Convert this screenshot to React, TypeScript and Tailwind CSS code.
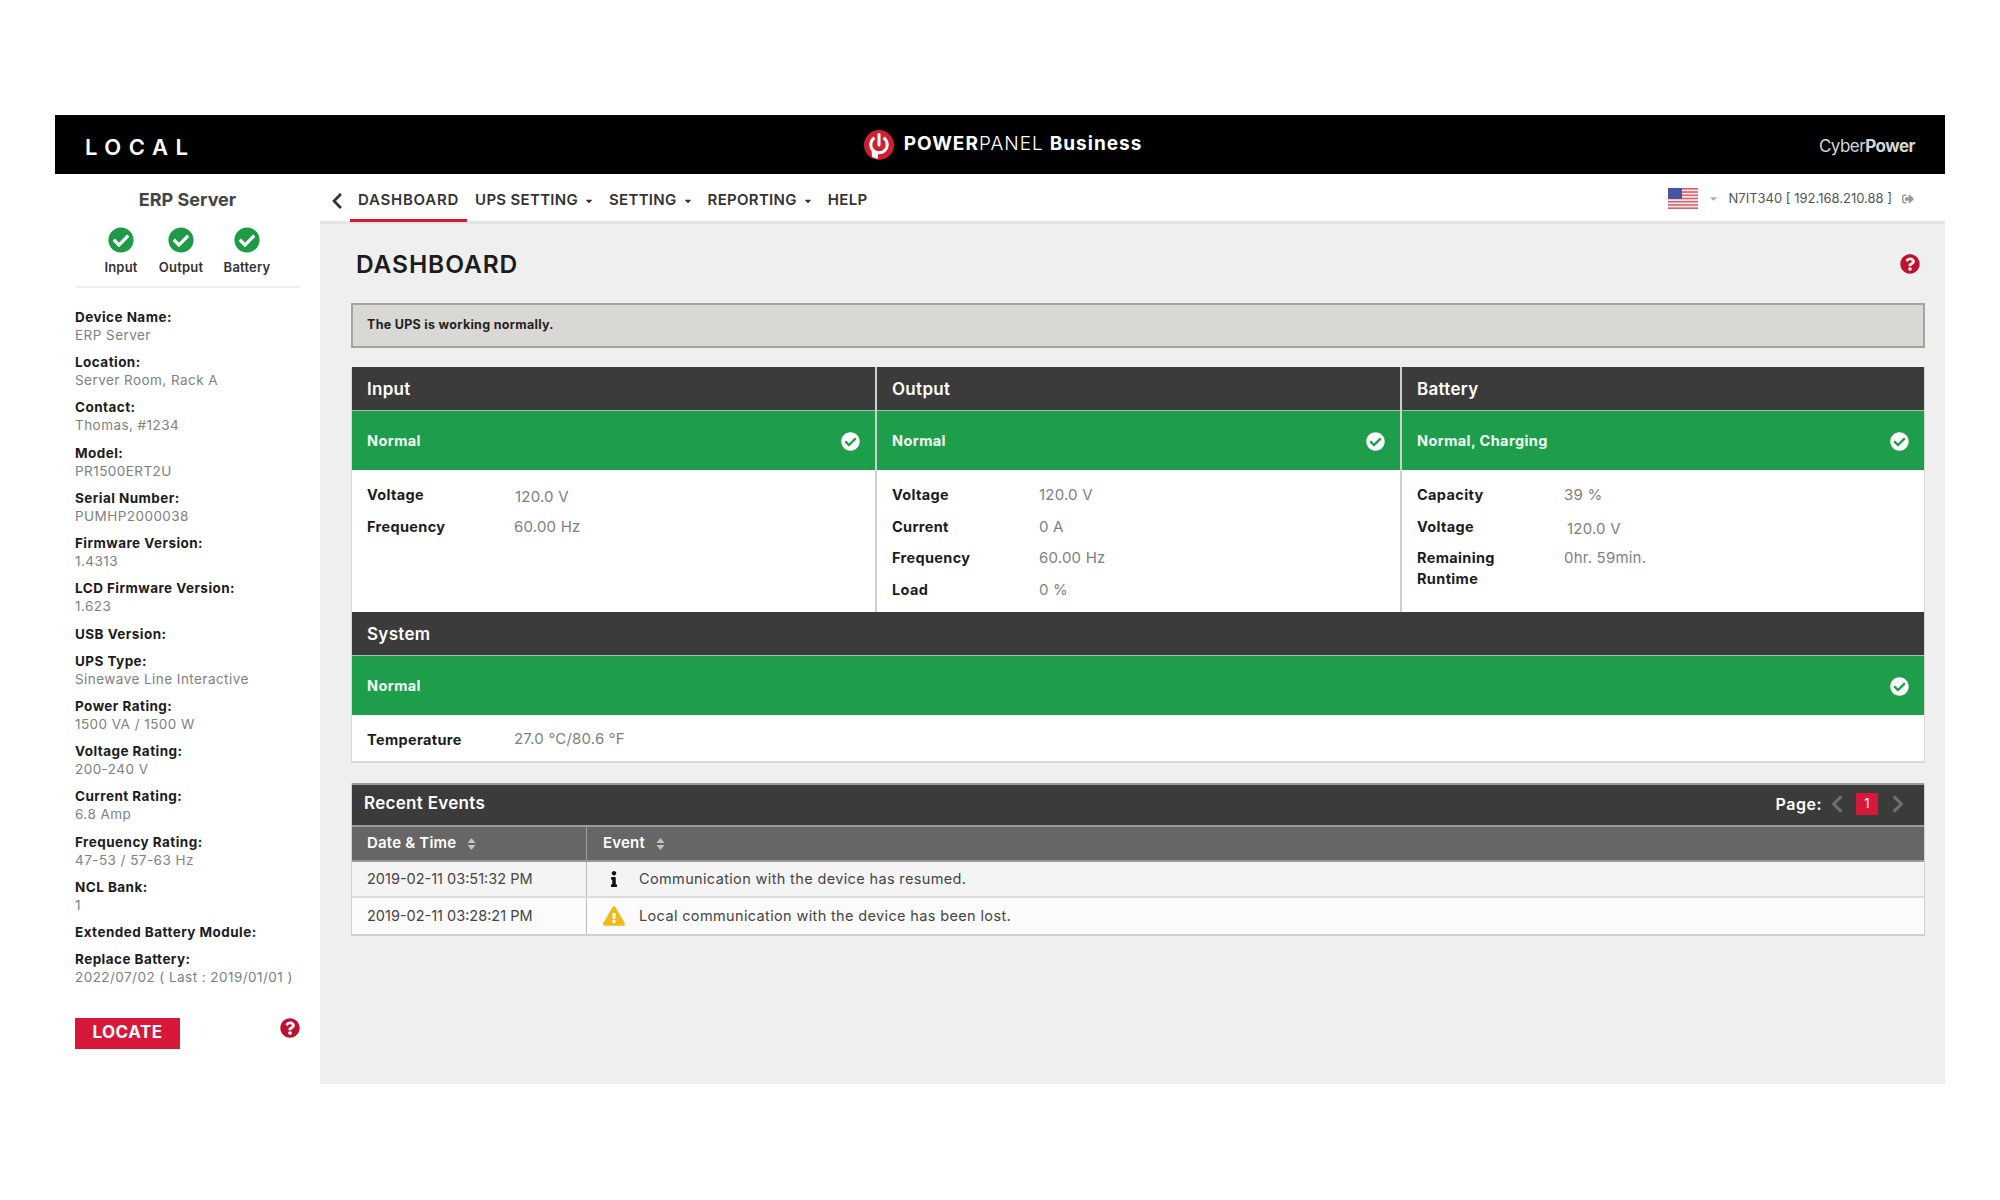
import type { ReactNode } from "react";
import { FaCaretDown, FaCheckCircle, FaChevronLeft, FaChevronRight, FaExclamationTriangle, FaInfo, FaQuestionCircle, FaSignOutAlt } from "react-icons/fa";

type Row = { label: string; value: string; valueClass?: string };

const deviceInfo: { label: string; value?: string }[] = [
  { label: "Device Name:", value: "ERP Server" },
  { label: "Location:", value: "Server Room, Rack A" },
  { label: "Contact:", value: "Thomas, #1234" },
  { label: "Model:", value: "PR1500ERT2U" },
  { label: "Serial Number:", value: "PUMHP2000038" },
  { label: "Firmware Version:", value: "1.4313" },
  { label: "LCD Firmware Version:", value: "1.623" },
  { label: "USB Version:" },
  { label: "UPS Type:", value: "Sinewave Line Interactive" },
  { label: "Power Rating:", value: "1500 VA / 1500 W" },
  { label: "Voltage Rating:", value: "200-240 V" },
  { label: "Current Rating:", value: "6.8 Amp" },
  { label: "Frequency Rating:", value: "47-53 / 57-63 Hz" },
  { label: "NCL Bank:", value: "1" },
  { label: "Extended Battery Module:" },
  { label: "Replace Battery:", value: "2022/07/02 ( Last : 2019/01/01 )" }
];

const columns: { title: string; status: string; rows: Row[] }[] = [
  {
    title: "Input",
    status: "Normal",
    rows: [
      { label: "Voltage", value: "120.0 V", valueClass: "mt-[2px] -mb-[2px] pl-[1px]" },
      { label: "Frequency", value: "60.00 Hz" }
    ]
  },
  {
    title: "Output",
    status: "Normal",
    rows: [
      { label: "Voltage", value: "120.0 V" },
      { label: "Current", value: "0 A" },
      { label: "Frequency", value: "60.00 Hz" },
      { label: "Load", value: "0 %" }
    ]
  },
  {
    title: "Battery",
    status: "Normal, Charging",
    rows: [
      { label: "Capacity", value: "39 %" },
      { label: "Voltage", value: "120.0 V", valueClass: "mt-[2px] -mb-[2px] pl-[3px]" },
      { label: "Remaining Runtime", value: "0hr. 59min." }
    ]
  }
];

function PowerLogo() {
  return (
    <svg viewBox="0 0 30 30" className="h-[30px] w-[30px]">
      <circle cx="15" cy="15" r="15" fill="#d0202f" />
      <path d="M10.500 7.800A8.200 8.200 0 1 0 19.500 7.800" fill="none" stroke="#fff" strokeWidth="3" />
      <path d="M7.500 19.500L14 22.500V29L8 27z" fill="#fff" />
      <path d="M15 4.500V15" stroke="#fff" strokeWidth="3" strokeLinecap="round" />
    </svg>
  );
}

function UsFlag() {
  const stripes = [0, 2, 4, 6, 8, 10, 12];
  return (
    <svg viewBox="0 0 30 21" preserveAspectRatio="none" className="h-[21px] w-[30px]">
      <rect width="30" height="21" fill="#f6f0f0" />
      {stripes.map((i) => (
        <rect key={i} y={(i * 21) / 13} width="30" height={21 / 13} fill="#d9626c" />
      ))}
      <rect width="14" height="11" fill="#4a55a0" />
    </svg>
  );
}

function SortIcon() {
  return (
    <svg viewBox="0 0 8 12" className="h-[12px] w-[9px]">
      <path d="M4 0l4 5H0zM4 12L0 7h8z" fill="#c4c4c4" />
    </svg>
  );
}

function StatusBar({ text }: { text: string }) {
  return (
    <div className="flex h-[60px] items-center justify-between border-t border-[#a9bdaf] bg-[#1e9e4a] pt-[2px] pr-[15px] pl-[15px]">
      <span className="pb-[2px] text-[14.500px] font-bold tracking-[0.4px] text-[#f0fff4]">{text}</span>
      <FaCheckCircle className="text-[19px] text-white" />
    </div>
  );
}

function DarkHeader({ title }: { title: string }) {
  return (
    <div className="flex h-[43px] items-center bg-[#3b3b3b] pt-[2px] pl-[15px] text-[17px] font-semibold tracking-[0.3px] text-white">{title}</div>
  );
}

function StatusLight({ label, width }: { label: string; width: string }) {
  return (
    <div className={`flex flex-col items-center ${width}`}>
      <FaCheckCircle className="text-[26px] text-[#1f9a49]" />
      <span className="mt-[6px] text-[13px] leading-[16px] font-semibold tracking-[0.2px] text-[#333]">{label}</span>
    </div>
  );
}

function Sidebar() {
  return (
    <aside className="flex w-[265px] shrink-0 flex-col bg-white pr-[20px] pl-[20px]">
      <h2 className="pt-[15px] text-center text-[18px] leading-[22px] font-bold text-[#444]">ERP Server</h2>
      <div className="mt-[16px] flex items-start border-b-2 border-[#eee] pb-[11px] pl-[16px]">
        <StatusLight label="Input" width="w-[60px]" />
        <StatusLight label="Output" width="w-[60px]" />
        <StatusLight label="Battery" width="w-[72px]" />
      </div>
      <dl className="mt-[20px] text-[13.500px] leading-[18px] tracking-[0.45px] whitespace-nowrap">
        {deviceInfo.map((item) => (
          <div key={item.label} className="mb-[9.230px]">
            <dt className="font-bold text-[#1c1c1c]">{item.label}</dt>
            {item.value ? <dd className="text-[#808080]">{item.value}</dd> : null}
          </div>
        ))}
      </dl>
      <div className="mt-[22px] flex items-start justify-between">
        <button className="flex h-[31px] w-[105px] items-center justify-center bg-[#d8183a] text-[17px] font-bold tracking-[0.5px] text-white">LOCATE</button>
        <FaQuestionCircle className="text-[20px] text-[#bd1230]" />
      </div>
    </aside>
  );
}

function NavItem({ label, caret, active }: { label: string; caret?: boolean; active?: boolean }) {
  return (
    <div className={`flex h-[48px] items-center gap-[6px] border-b-[3px] pt-[8px] pl-[8px] ${caret ? "pr-[7px]" : "pr-[8px]"} ${active ? "border-[#c8202f]" : "border-transparent"}`}>
      <span className={`text-[15px] font-semibold text-[#333] ${active ? "tracking-[0.75px]" : "tracking-[0.3px]"}`}>{label}</span>
      {caret ? <FaCaretDown className="text-[10px] text-[#333]" /> : null}
    </div>
  );
}

function EventRow({ date, text, icon, bg }: { date: string; text: string; icon: ReactNode; bg: string }) {
  return (
    <div className={`flex h-[36px] border-b-2 border-[#dcdcdc] text-[14.500px] text-[#444] last:border-b-0 ${bg}`}>
      <div className="flex w-[235px] items-center border-r border-[#bcbcbc] pl-[15px]">{date}</div>
      <div className="flex flex-1 items-center">
        <div className="flex w-[52px] justify-center pl-[2px]">{icon}</div>
        <span className="tracking-[0.36px]">{text}</span>
      </div>
    </div>
  );
}

export default function App() {
  return (
    <div className="h-[1200px] w-full bg-white pt-[115px] pr-[55px] pl-[55px] font-['Inter','Liberation_Sans',sans-serif]">
      <header className="flex h-[59px] items-center justify-between bg-black pr-[30px] pl-[30px]">
        <div className="w-[300px] pt-[5px] text-[22px] font-semibold tracking-[7.500px] text-white">LOCAL</div>
        <div className="ml-[6px] flex items-center gap-[10px]">
          <PowerLogo />
          <div className="text-[19px] tracking-[1px] text-white">
            <span className="font-bold">POWER</span>
            <span className="font-light">PANEL</span>
            <span className="ml-[6px] font-bold">Business</span>
          </div>
        </div>
        <div className="flex w-[300px] justify-end pt-[4px] text-[17px] font-bold tracking-[-0.5px] text-[#d6d6d6]">
          <span className="font-normal">Cyber</span>Power
        </div>
      </header>

      <div className="flex h-[910px]">
        <Sidebar />
        <main className="flex min-w-0 flex-1 flex-col bg-[#efefef]">
          <nav className="flex h-[50px] items-stretch justify-between border-b-[3px] border-[#e2e2e2] bg-white pr-[31px] pl-[8px]">
            <div className="flex items-start">
              <FaChevronLeft className="mt-[18px] mr-[4px] text-[18px] text-[#333]" />
              <NavItem label="DASHBOARD" active />
              <NavItem label="UPS SETTING" caret />
              <NavItem label="SETTING" caret />
              <NavItem label="REPORTING" caret />
              <NavItem label="HELP" />
            </div>
            <div className="flex items-center gap-[10px] pt-[2px]">
              <UsFlag />
              <FaCaretDown className="text-[11px] text-[#aaa]" />
              <span className="text-[13px] text-[#555]">N7IT340 [ 192.168.210.88 ]</span>
              <FaSignOutAlt className="text-[12px] text-[#999]" />
            </div>
          </nav>

          <div className="pt-[24px] pr-[20px] pl-[31px]">
            <div className="flex h-[32px] items-center justify-between pr-[5px] pl-[5px]">
              <h1 className="text-[24.500px] font-semibold tracking-[0.9px] text-[#1c1c1c]">DASHBOARD</h1>
              <FaQuestionCircle className="text-[20px] text-[#bd1230]" />
            </div>

            <div className="mt-[23px] flex h-[45px] items-center border-2 border-[#a3a3a0] bg-[#d9d8d4] pl-[14px] text-[12.500px] font-bold tracking-[0.3px] text-[#222]">
              The UPS is working normally.
            </div>

            <section className="mt-[19px] border-r border-b-2 border-l border-[#d8d8d8] bg-white">
              <div className="grid grid-cols-[523px_525px_1fr]">
                {columns.map((col, i) => (
                  <div key={col.title} className={i > 0 ? "border-l-2 border-[#cfcfcf]" : ""}>
                    <DarkHeader title={col.title} />
                    <StatusBar text={col.status} />
                    <div className="h-[142px] pt-[14px] pl-[15px] text-[15px] leading-[21px]">
                      {col.rows.map((row) => (
                        <div key={row.label} className="mb-[10.500px] flex">
                          <span className="w-[147px] shrink-0 pr-[30px] text-[14.500px] font-bold tracking-[0.35px] text-[#1c1c1c]">{row.label}</span>
                          <span className={`tracking-[0.2px] text-[#808080] ${row.valueClass ?? ""}`}>{row.value}</span>
                        </div>
                      ))}
                    </div>
                  </div>
                ))}
              </div>
              <DarkHeader title="System" />
              <StatusBar text="Normal" />
              <div className="flex h-[46px] items-center pt-[3px] pl-[15px]">
                <span className="w-[147px] shrink-0 text-[14.500px] font-bold tracking-[0.35px] text-[#1c1c1c]">Temperature</span>
                <span className="text-[15px] tracking-[0.2px] text-[#808080]">27.0 °C/80.6 °F</span>
              </div>
            </section>

            <section className="mt-[20px] border-r border-b-2 border-l border-[#d0d0d0]">
              <div className="flex h-[42px] items-center justify-between border-t-2 border-[#9a9a9a] bg-[#3b3b3b] pr-[16px] pb-[2px] pl-[12px] text-white">
                <span className="text-[17px] font-semibold tracking-[0.3px]">Recent Events</span>
                <div className="flex items-center">
                  <span className="mr-[5px] text-[16px] font-semibold tracking-[0.5px]">Page:</span>
                  <FaChevronLeft className="text-[20px] text-[#6e6e6e]" />
                  <span className="mr-[10px] ml-[9px] flex h-[22px] w-[22px] items-center justify-center bg-[#d8183a] text-[13px] text-white">1</span>
                  <FaChevronRight className="text-[20px] text-[#6e6e6e]" />
                </div>
              </div>
              <div className="flex h-[37px] border-t-2 border-b-2 border-[#9a9a9a] bg-[#666] text-[15px] font-semibold tracking-[0.2px] text-white">
                <div className="flex w-[235px] items-center gap-[11px] border-r border-[#a0a0a0] pl-[15px]">
                  Date &amp; Time <SortIcon />
                </div>
                <div className="flex flex-1 items-center gap-[11px] pl-[16px]">
                  Event <SortIcon />
                </div>
              </div>
              <EventRow date="2019-02-11 03:51:32 PM" text="Communication with the device has resumed." bg="bg-[#f4f4f4]" icon={<FaInfo className="text-[16px] text-[#111]" />} />
              <EventRow date="2019-02-11 03:28:21 PM" text="Local communication with the device has been lost." bg="bg-[#fbfbfb]" icon={<FaExclamationTriangle className="text-[22px] text-[#f4b81f]" />} />
            </section>
          </div>
        </main>
      </div>
    </div>
  );
}
